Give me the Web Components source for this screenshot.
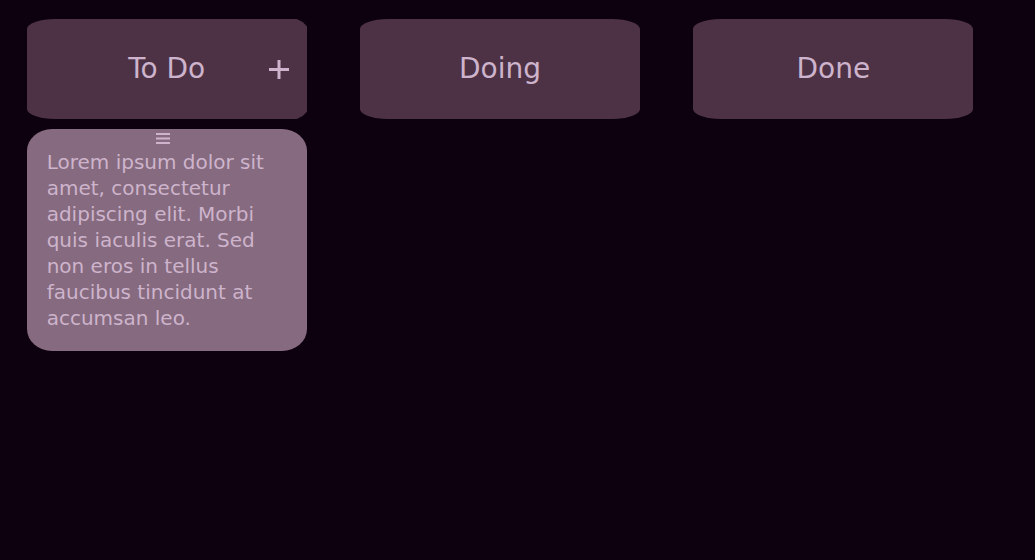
<!DOCTYPE html>
<html lang="en">
<head>
<meta charset="utf-8">
<meta name="viewport" content="width=device-width, initial-scale=1">
<title>Task board</title>
<style>
  body { margin: 0; background: #0d000f; color: #cdb4cc; font-family: "DejaVu Sans", sans-serif; }
</style>
</head>
<body>
<kanban-board>
  <kanban-column heading="To Do" can-add>
    <task-card>Lorem ipsum dolor sit amet, consectetur adipiscing elit. Morbi quis iaculis erat. Sed non eros in tellus faucibus tincidunt at accumsan leo.</task-card>
  </kanban-column>
  <kanban-column heading="Doing"></kanban-column>
  <kanban-column heading="Done"></kanban-column>
</kanban-board>

<template id="board">
  <style>
    :host { display: block; }
    main { display: grid; grid-template-columns: repeat(3, 1fr); padding: 19px 35px 19px 0; }
  </style>
  <main><slot></slot></main>
</template>

<template id="column">
  <style>
    :host { display: block; }
    section { width: 84%; margin: 0 auto; display: flex; flex-direction: column; gap: 10px; }
    header { display: grid; grid-template-columns: 56px 1fr 56px; align-items: center; min-height: 100px; background: #4d3246; border-radius: 28px / 10px; }
    :host([can-add]) header { border-radius: 28px 0 0 28px / 10px 0 0 10px; clip-path: polygon(0 0, calc(100% - 10px) 0, calc(100% - 4px) 3px, calc(100% + 1px) 8px, calc(100% + 1px) calc(100% - 8px), calc(100% - 4px) calc(100% - 3px), calc(100% - 10px) 100%, 0 100%); }
    h2 { grid-column: 2; margin: 0; font-size: 28px; line-height: 36px; font-weight: 400; text-align: center; }
    button { display: flex; align-items: center; justify-content: center; height: 100px; padding: 2px 0 0; border: 0; background: none; color: inherit; cursor: pointer; }
    svg { display: block; }
  </style>
  <section>
    <header><h2></h2></header>
    <slot></slot>
  </section>
</template>

<template id="add-button">
  <button type="button" aria-label="Add task">
    <svg width="20" height="20" viewBox="0 0 20 20" aria-hidden="true"><path d="M0 8h8.500V0h3v8H20v3h-8.500v8h-3v-8H0z" fill="currentColor"/></svg>
  </button>
</template>

<template id="card">
  <style>
    :host { display: block; }
    article { background: #866a7f; border-radius: 25px / 22px; padding: 0 20px 20px; }
    button { display: block; margin: 0 auto; padding: 4px 7px 1px 0; border: 0; background: none; color: inherit; cursor: grab; }
    svg { display: block; }
    p { margin: 3px 0 0; font-size: 20px; line-height: 26px; max-width: 220px; }
  </style>
  <article>
    <button type="button" aria-label="Move task">
      <svg width="14" height="12" viewBox="0 0 14 12" aria-hidden="true"><path d="M0 0h14v2H0zM0 4.500h14v2H0zM0 9h14v2H0z" fill="currentColor"/></svg>
    </button>
    <p><slot></slot></p>
  </article>
</template>

<script>
  const stamp = (host, id) => {
    const root = host.attachShadow({ mode: "open" });
    root.append(document.getElementById(id).content.cloneNode(true));
    return root;
  };

  class KanbanBoard extends HTMLElement {
    constructor() { super(); stamp(this, "board"); }
  }

  class KanbanColumn extends HTMLElement {
    constructor() { super(); stamp(this, "column"); }
    connectedCallback() {
      this.shadowRoot.querySelector("h2").textContent = this.getAttribute("heading");
      const header = this.shadowRoot.querySelector("header");
      if (this.hasAttribute("can-add") && !header.querySelector("button")) {
        header.append(document.getElementById("add-button").content.cloneNode(true));
      }
    }
  }

  class TaskCard extends HTMLElement {
    constructor() { super(); stamp(this, "card"); }
  }

  customElements.define("kanban-board", KanbanBoard);
  customElements.define("kanban-column", KanbanColumn);
  customElements.define("task-card", TaskCard);
</script>
</body>
</html>
